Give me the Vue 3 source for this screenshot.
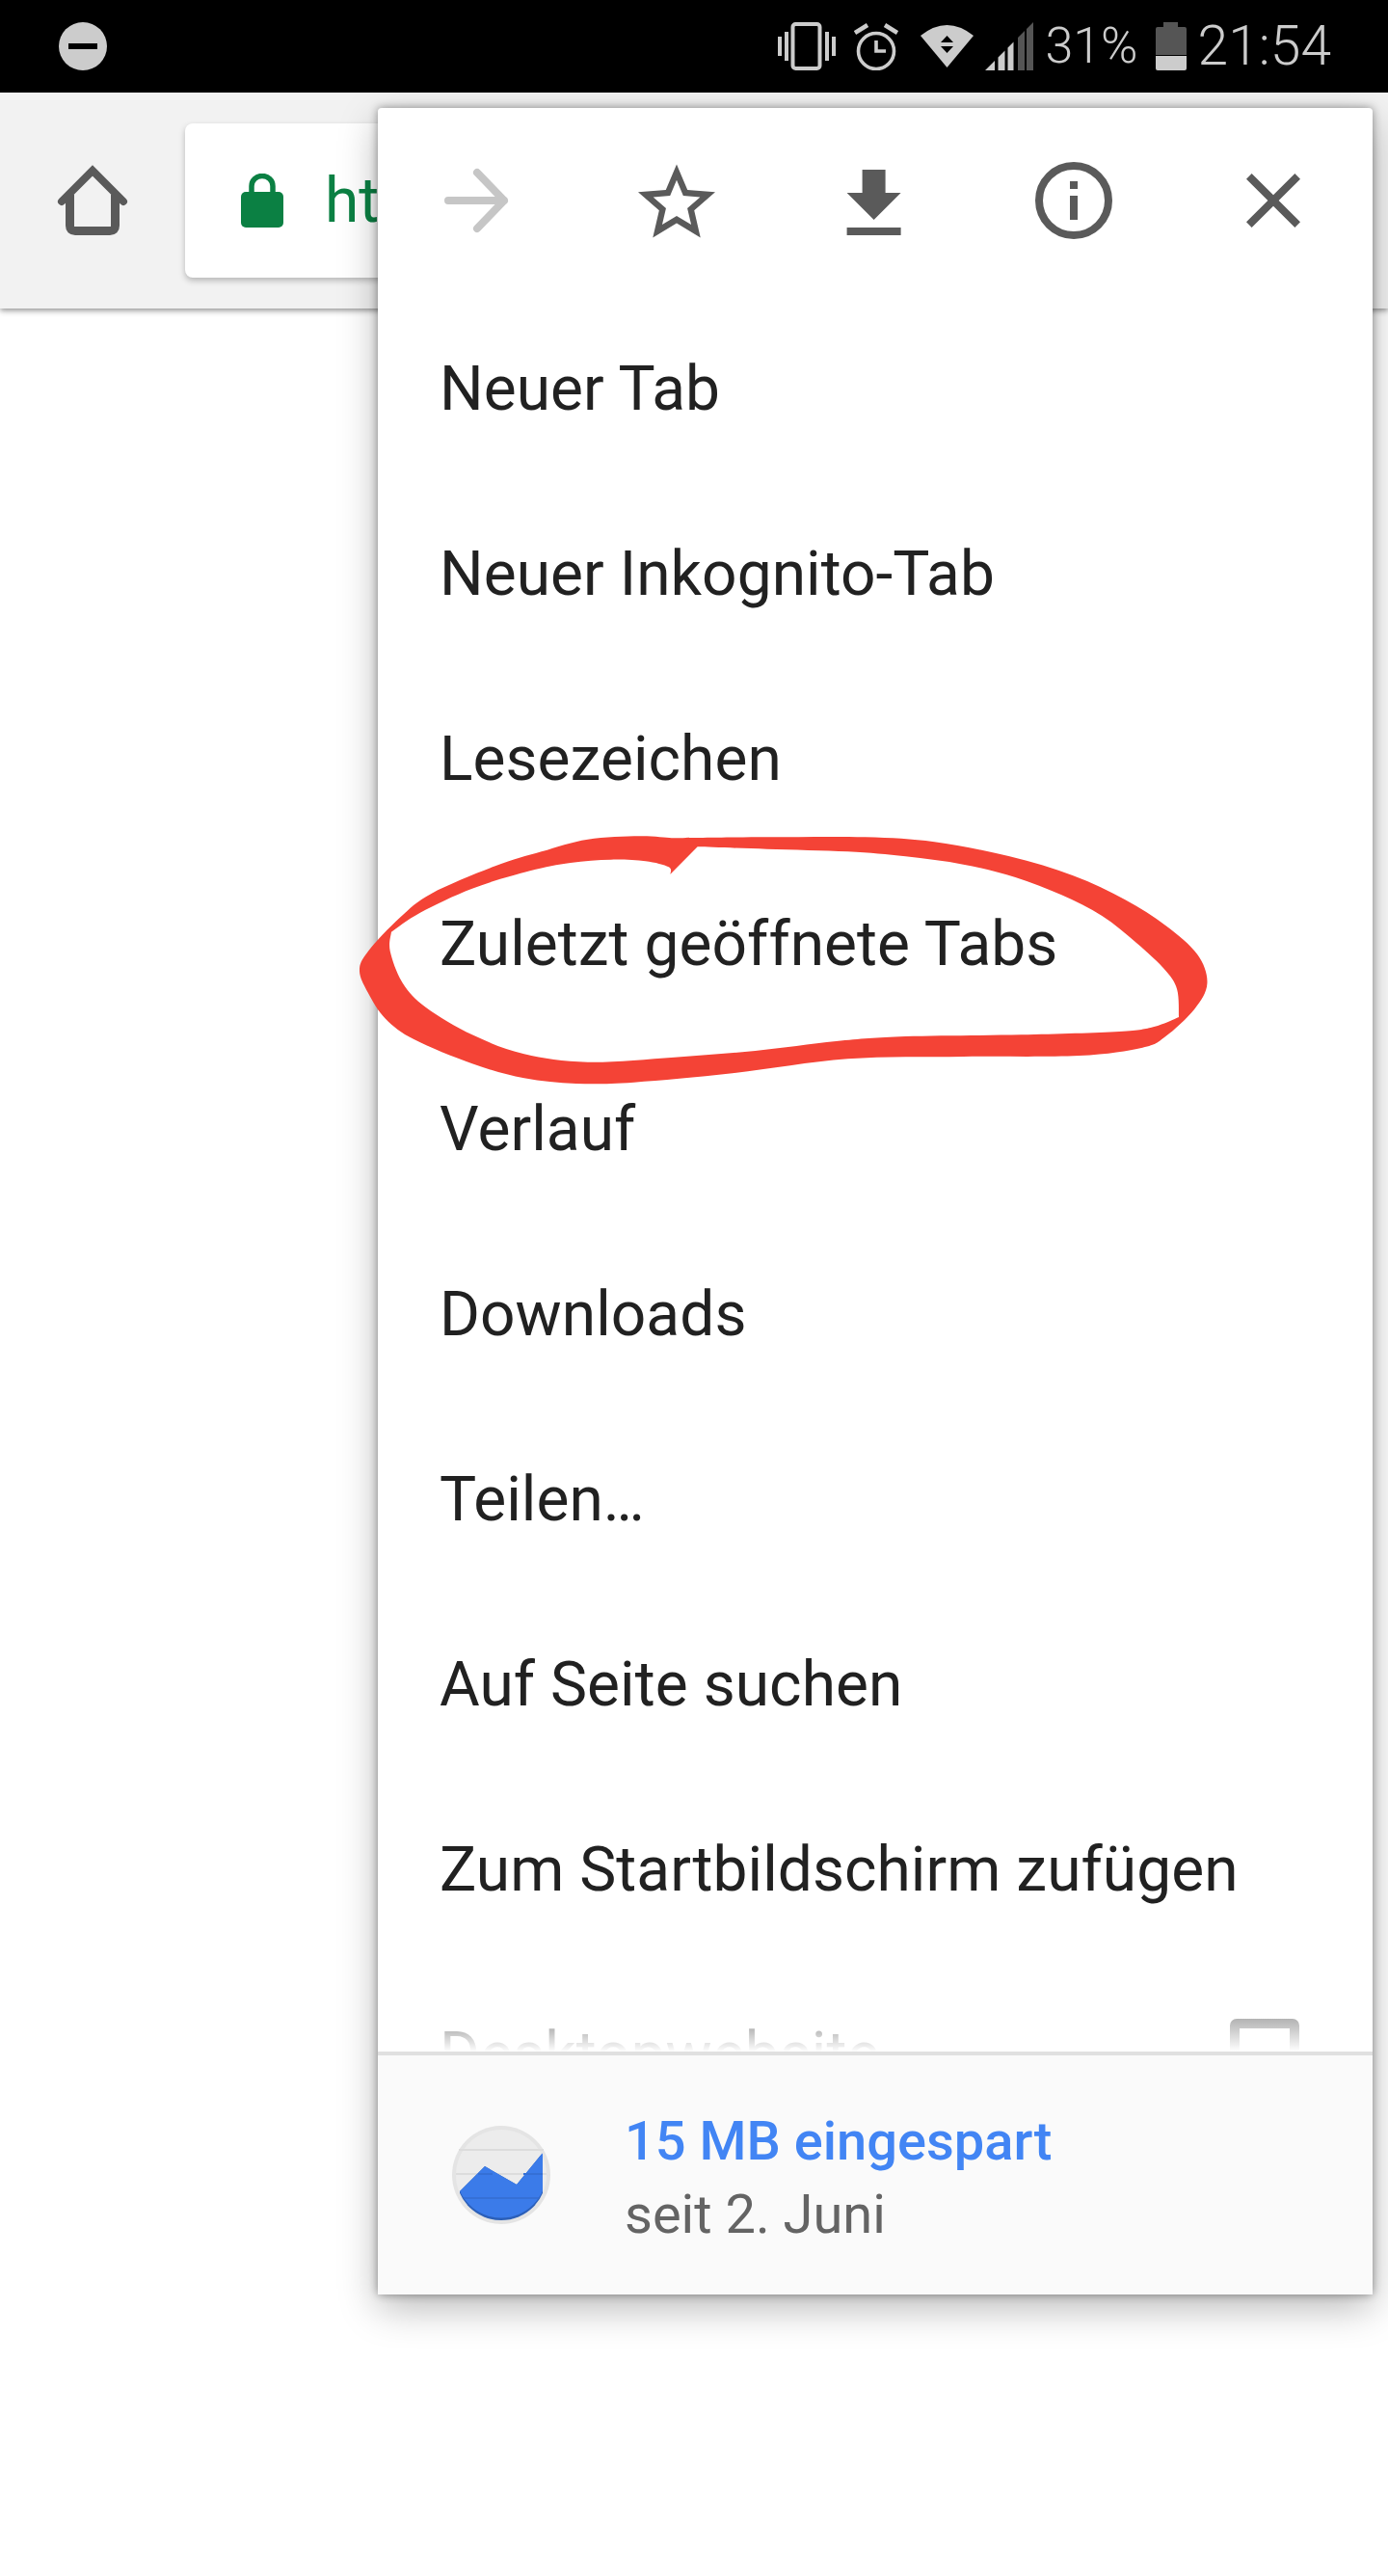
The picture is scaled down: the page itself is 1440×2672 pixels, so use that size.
<template>
  <div class="screen">
    <div class="status">
      <div class="dnd"><span class="dnd-bar" /></div>
      <div class="status-right">
        <svg class="st-vibrate" width="60" height="50" viewBox="0 0 60 50">
          <rect x="15.5" y="2" width="28" height="46" rx="3" fill="none" stroke="#ccc" stroke-width="4" />
          <path fill="#ccc" d="M0 15h4v20H0zM7 10h4v30H7zM49 10h4v30h-4zM56 15h4v20h-4z" />
        </svg>
        <svg class="st-alarm" width="46" height="50" viewBox="0 0 46 50">
          <circle cx="23" cy="30" r="18.5" fill="none" stroke="#ccc" stroke-width="3.6" />
          <path fill="none" stroke="#ccc" stroke-width="3.6" d="M23 19v11h10" />
          <path fill="none" stroke="#ccc" stroke-width="4.5" d="M1 11l13-8M45 11L32 3" />
        </svg>
        <svg class="st-wifi" width="55" height="44" viewBox="0 0 55 44">
          <path fill="#ccc" d="M0 11Q27.5-11 55 11L27.5 44z" />
          <path fill="#000" d="M27.5 11l6.5 7H21zM21 22h13l-6.500 7z" />
        </svg>
        <svg class="st-signal" width="50" height="50" viewBox="0 0 50 50">
          <path fill="#ccc" d="M0 50l10-10v10zM13.500 36.500l7-7V50h-7zM23.500 26.500l6-6V50h-6z" />
          <path fill="#555" d="M34 16l7-7v41h-7zM43 7l7-7v50h-7z" />
        </svg>
        <span class="st-pct">31%</span>
        <svg class="st-battery" width="32" height="50" viewBox="0 0 32 50">
          <path fill="#555" d="M8 0h15v5h7q2 0 2 2v27H0V7q0-2 2-2h6z" />
          <path fill="#ccc" d="M0 35h32v13q0 2-2 2H2q-2 0-2-2z" />
        </svg>
        <span class="st-time">21:54</span>
      </div>
    </div>

    <div class="toolbar">
      <svg class="home" width="96" height="96" viewBox="0 0 96 96">
        <path fill="none" stroke="#5a5a5a" stroke-width="8" stroke-linecap="round" d="M16 49L48 17l32 32" />
        <path fill="none" stroke="#5a5a5a" stroke-width="9" d="M24.500 42v32q0 5.500 5.500 5.500h36q5.500 0 5.500-5.500V42" />
      </svg>
      <div class="url">
        <svg class="lock" width="44" height="56" viewBox="0 0 44 56">
          <path fill="none" stroke="#0b8043" stroke-width="5.500" d="M11 22V13a11 10.500 0 0 1 22 0v9" />
          <rect x="0" y="19" width="44" height="37" rx="5" fill="#0b8043" />
        </svg>
        <span class="url-text">https://</span>
      </div>
    </div>

    <div class="menu">
      <div class="menu-icons">
        <div class="icon-cell">
          <svg width="96" height="96" viewBox="0 0 96 96">
            <path fill="none" stroke="#c6c6c6" stroke-width="8" stroke-linecap="round" stroke-linejoin="round" d="M18 48h58M48 19l28 29-28 29" />
          </svg>
        </div>
        <div class="icon-cell">
          <svg width="96" height="96" viewBox="0 -0.600 24 24">
            <path fill="#5a5a5a" d="M22 9.240l-7.190-.620L12 2 9.190 8.630 2 9.240l5.460 4.730L5.820 21 12 17.270 18.180 21l-1.630-7.030L22 9.240zM12 15.400l-3.760 2.270 1-4.280-3.320-2.880 4.380-.380L12 6.100l1.710 4.040 4.380.380-3.320 2.880 1 4.280L12 15.400z" />
          </svg>
        </div>
        <div class="icon-cell">
          <svg width="96" height="96" viewBox="0.350 -1 24 24">
            <path fill="#5a5a5a" d="M19 9h-4V3H9v6H5l7 7 7-7zM5 18v2h14v-2H5z" />
          </svg>
        </div>
        <div class="icon-cell">
          <svg width="96" height="96" viewBox="0 0 96 96">
            <circle cx="48" cy="48" r="36" fill="none" stroke="#5a5a5a" stroke-width="8" />
            <path fill="#5a5a5a" d="M44 28h8v8h-8zM44 43h8v25h-8z" />
          </svg>
        </div>
        <div class="icon-cell">
          <svg width="96" height="96" viewBox="0 0 24 24">
            <path fill="#5a5a5a" d="M19 6.410L17.590 5 12 10.590 6.410 5 5 6.410 10.590 12 5 17.590 6.410 19 12 13.410 17.590 19 19 17.590 13.410 12z" />
          </svg>
        </div>
      </div>

      <div class="menu-list">
        <div v-for="item in items" :key="item" class="menu-row">{{ item }}</div>
        <div class="menu-row">
          <span>Desktopwebsite</span>
          <span class="checkbox" />
        </div>
        <div class="list-fade" />
      </div>

      <div class="menu-footer">
        <svg class="saver" width="112" height="112" viewBox="0 0 112 112">
          <defs>
            <clipPath id="saverClip"><circle cx="56" cy="56" r="47" /></clipPath>
            <clipPath id="saverClipTop"><circle cx="56" cy="53.500" r="47" /></clipPath>
          </defs>
          <circle cx="56" cy="56" r="51" fill="#e4e4e4" />
          <circle cx="56" cy="56" r="47" fill="#ececec" />
          <path stroke="#dcdcdc" stroke-width="2" d="M12 30h88M9 55h94" />
          <g clip-path="url(#saverClip)">
            <path fill="#2b5fb8" d="M13 73l26-26 33 19 27-33v79H13z" />
          </g>
          <g clip-path="url(#saverClipTop)">
            <path fill="#3b7be9" d="M13 73l26-26 33 19 27-33v79H13z" />
            <path stroke="#3570d6" stroke-width="2" d="M13 80h90" />
            <path stroke="#3570d6" stroke-width="2" d="M32 55h15M79 55h20" />
          </g>
        </svg>
        <div class="saver-text">
          <div class="saver-title">15 MB eingespart</div>
          <div class="saver-sub">seit 2. Juni</div>
        </div>
      </div>
    </div>

    <svg class="ring" width="940" height="300" viewBox="0 0 1568 900" preserveAspectRatio="none">
      <path fill="#f44336" fill-rule="evenodd" :d="ringPath" />
    </svg>
  </div>
</template>

<script setup>
const items = [
  'Neuer Tab',
  'Neuer Inkognito-Tab',
  'Lesezeichen',
  'Zuletzt geöffnete Tabs',
  'Verlauf',
  'Downloads',
  'Teilen…',
  'Auf Seite suchen',
  'Zum Startbildschirm zufügen',
]

const outer = [
  [595, 88], [540, 82], [450, 92], [370, 130], [290, 175], [180, 260], [125, 335], [70, 440],
  [55, 500], [70, 570], [100, 650], [150, 715], [250, 790], [340, 835], [430, 852], [530, 848],
  [700, 820], [900, 775], [1100, 768], [1300, 765], [1410, 740], [1450, 705], [1500, 620],
  [1522, 540], [1505, 450], [1450, 360], [1380, 280], [1290, 205], [1180, 145], [1050, 100],
  [930, 85], [760, 85], [595, 88],
]
const innerRight = [
  [640, 115], [760, 122], [900, 130], [1000, 145], [1100, 170], [1190, 210], [1270, 265],
  [1340, 330], [1400, 415], [1450, 500], [1470, 560], [1473, 645],
]
const innerBottom = [
  [1473, 645], [1430, 675], [1370, 690], [1200, 700], [1000, 705], [880, 720], [740, 750],
  [600, 770], [450, 785], [340, 760], [250, 700], [170, 615], [130, 540], [108, 440], [110, 380],
]
const innerTop = [
  [110, 380], [160, 320], [250, 245], [350, 190], [420, 165], [490, 155], [550, 160], [590, 178], [593, 200],
]

// smooth curve through the traced points of the marker stroke
const spline = (pts) => {
  let d = ''
  for (let i = 0; i < pts.length - 1; i++) {
    const p0 = pts[i - 1] || pts[i]
    const p1 = pts[i]
    const p2 = pts[i + 1]
    const p3 = pts[i + 2] || p2
    const c1 = [p1[0] + (p2[0] - p0[0]) / 6, p1[1] + (p2[1] - p0[1]) / 6]
    const c2 = [p2[0] - (p3[0] - p1[0]) / 6, p2[1] - (p3[1] - p1[1]) / 6]
    d += `C${c1[0]} ${c1[1]} ${c2[0]} ${c2[1]} ${p2[0]} ${p2[1]}`
  }
  return d
}

const ringPath =
  `M595 88${spline(outer)}Z` +
  `M640 115${spline(innerRight)}${spline(innerBottom)}${spline(innerTop)}Z`
</script>

<style scoped>
.screen {
  position: relative;
  width: 1440px;
  height: 2672px;
  overflow: hidden;
  background: #fff;
  font-family: Roboto, sans-serif;
}

.status {
  position: relative;
  z-index: 3;
  display: flex;
  align-items: center;
  justify-content: space-between;
  height: 96px;
  padding: 0 59px 0 61px;
  box-sizing: border-box;
  background: #000;
  color: #ccc;
}

.dnd {
  display: flex;
  align-items: center;
  justify-content: center;
  width: 50px;
  height: 50px;
  border-radius: 50%;
  background: #ccc;
}

.dnd-bar {
  width: 30px;
  height: 6px;
  background: #000;
}

.status-right {
  display: flex;
  align-items: center;
}

.st-alarm { margin-left: 19px; }
.st-wifi { margin-left: 23px; }
.st-signal { margin-left: 12px; }

.st-pct {
  margin-left: 12px;
  font-size: 52px;
  font-weight: 350;
  line-height: 96px;
}

.st-battery { margin-left: 18px; }

.st-time {
  margin-left: 12px;
  font-size: 57px;
  font-weight: 350;
  line-height: 96px;
}

.toolbar {
  display: flex;
  align-items: center;
  height: 224px;
  padding-left: 48px;
  box-sizing: border-box;
  background: #f2f2f2;
  box-shadow: 0 2px 6px rgba(0, 0, 0, 0.45);
}

.home {
  flex: none;
}

.url {
  display: flex;
  align-items: center;
  width: 1208px;
  height: 160px;
  margin-left: 48px;
  padding-left: 58px;
  box-sizing: border-box;
  border-radius: 8px;
  background: #fff;
  box-shadow: 0 3px 6px rgba(0, 0, 0, 0.25);
}

.lock {
  flex: none;
}

.url-text {
  margin-left: 43px;
  font-size: 64px;
  color: #0b8043;
}

.menu {
  position: absolute;
  top: 112px;
  left: 392px;
  z-index: 2;
  display: flex;
  flex-direction: column;
  width: 1032px;
  height: 2268px;
  border-radius: 4px;
  background: #fff;
  box-shadow: 0 0 10px rgba(0, 0, 0, 0.4), 0 14px 40px rgba(0, 0, 0, 0.28);
}

.menu-icons {
  display: grid;
  grid-template-columns: repeat(5, 1fr);
  flex: none;
  height: 192px;
}

.icon-cell {
  display: flex;
  align-items: center;
  justify-content: center;
}

.menu-list {
  position: relative;
  flex: none;
  height: 1824px;
  padding-top: 3px;
  box-sizing: border-box;
  overflow: hidden;
}

.menu-row {
  display: flex;
  align-items: center;
  justify-content: space-between;
  height: 192px;
  padding: 0 76px 0 64px;
  font-size: 64px;
  letter-spacing: 0.06px;
  color: #212121;
  box-sizing: border-box;
  white-space: nowrap;
}

.checkbox {
  width: 72px;
  height: 72px;
  margin-top: -3px;
  border: 10px solid #5a5a5a;
  border-radius: 7px;
  box-sizing: border-box;
}

.list-fade {
  position: absolute;
  left: 0;
  right: 0;
  bottom: 0;
  height: 44px;
  background: linear-gradient(rgba(255, 255, 255, 0.4), #fff);
}

.menu-footer {
  display: flex;
  flex: 1;
  align-items: center;
  padding-left: 72px;
  background: #fafafa;
  border-top: 4px solid #e0e0e0;
}

.saver {
  flex: none;
}

.saver-text {
  margin-left: 72px;
  padding-top: 5px;
}

.saver-title {
  font-size: 56px;
  font-weight: 500;
  line-height: 76px;
  color: #4285f4;
}

.saver-sub {
  font-size: 56px;
  line-height: 76px;
  color: #646464;
}

.ring {
  position: absolute;
  top: 840px;
  left: 340px;
  z-index: 2;
}
</style>

<style>
html, body {
  margin: 0;
  background: #fff;
}
</style>
